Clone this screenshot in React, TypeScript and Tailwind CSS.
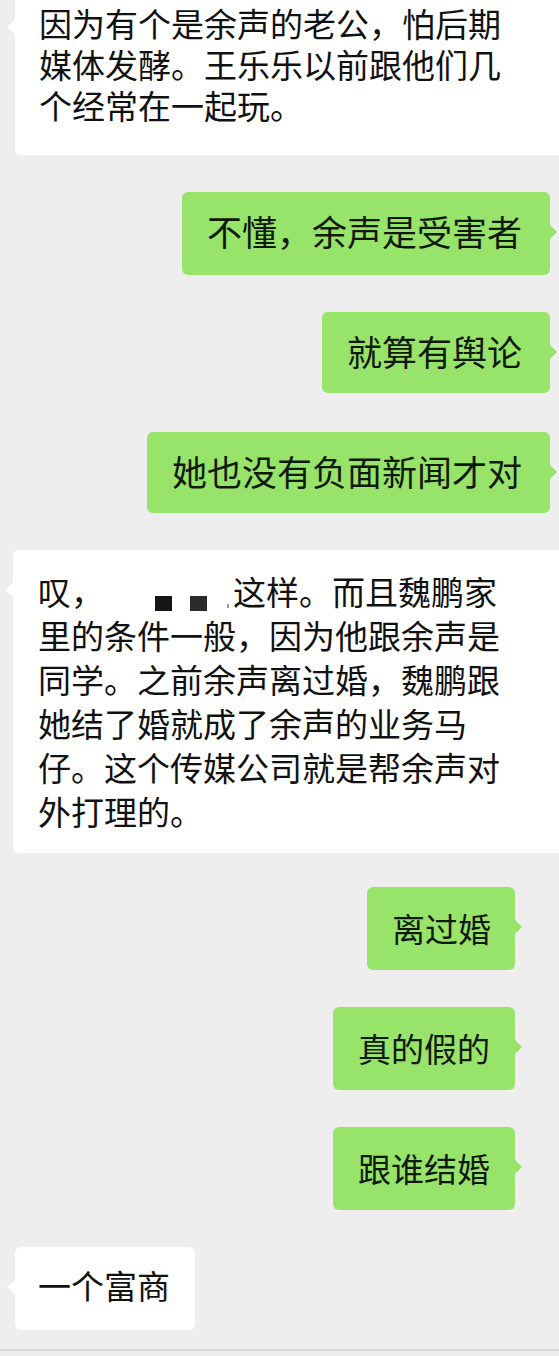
import React from 'react';

const GREEN = 'bg-[#98e36a]';

const LeftTail = () => (
  <span className="absolute left-[-8px] top-[33px] h-0 w-0 border-y-[7px] border-r-[8px] border-y-transparent border-r-white" />
);

const RightTail = () => (
  <span className="absolute right-[-7px] top-[33px] h-0 w-0 border-y-[7px] border-l-[7px] border-y-transparent border-l-[#98e36a]" />
);

interface GreenProps {
  text: string;
  className: string;
}

const GreenBubble: React.FC<GreenProps> = ({ text, className }) => (
  <div className={`relative self-end rounded-[6px] ${GREEN} text-[#101a0a] whitespace-nowrap ${className}`}>
    {text}
    <RightTail />
  </div>
);

const App: React.FC = () => {
  return (
    <div className="flex h-[1356px] w-[559px] flex-col overflow-hidden bg-[#eeeeee] font-['Noto_Sans_CJK_SC','Noto_Sans',sans-serif]">
      {/* incoming, top cut off */}
      <div className="relative ml-[15px] mr-[-12px] mt-[-13px] rounded-[6px] bg-white pb-[29px] pl-[24px] pt-[16px] text-[33px] leading-[41px] text-[#111] whitespace-nowrap">
        <div>因为有个是余声的老公，怕后期</div>
        <div>媒体发酵。王乐乐以前跟他们几</div>
        <div>个经常在一起玩。</div>
        <LeftTail />
      </div>

      <GreenBubble text="不懂，余声是受害者" className="mr-[9px] mt-[37px] pb-[24px] pl-[25px] pr-[28px] pt-[18px] text-[35px] leading-[41px]" />
      <GreenBubble text="就算有舆论" className="mr-[9px] mt-[37px] pb-[22px] pl-[25px] pr-[28px] pt-[18px] text-[35px] leading-[41px]" />
      <GreenBubble text="她也没有负面新闻才对" className="mr-[9px] mt-[39px] pb-[22px] pl-[25px] pr-[28px] pt-[18px] text-[35px] leading-[41px]" />

      {/* long incoming message */}
      <div className="relative ml-[13px] mr-[-12px] mt-[37px] rounded-[6px] bg-white pb-[20px] pl-[25px] pt-[19px] text-[33px] leading-[44px] text-[#111] whitespace-nowrap">
        <div className="flex h-[44px]">
          <span>叹，</span>
          <div className="relative flex w-[129px] items-start pt-[27px]">
            <span className="ml-[51px] h-[15px] w-[17px] bg-[#151515]" />
            <span className="ml-[18px] h-[15px] w-[17px] bg-[#2a2a2a]" />
            <span className="ml-[20px] mt-[8px] h-[4px] w-[2px] bg-[#9a9a9a]" />
          </div>
          <span>这样。而且魏鹏家</span>
        </div>
        <div>里的条件一般，因为他跟余声是</div>
        <div>同学。之前余声离过婚，魏鹏跟</div>
        <div>她结了婚就成了余声的业务马</div>
        <div>仔。这个传媒公司就是帮余声对</div>
        <div>外打理的。</div>
        <LeftTail />
      </div>

      <GreenBubble text="离过婚" className="mr-[44px] mt-[34px] pb-[21px] pl-[25px] pr-[24px] pt-[21px] text-[33px] leading-[41px]" />
      <GreenBubble text="真的假的" className="mr-[44px] mt-[37px] pb-[21px] pl-[25px] pr-[25px] pt-[21px] text-[33px] leading-[41px]" />
      <GreenBubble text="跟谁结婚" className="mr-[44px] mt-[37px] pb-[21px] pl-[25px] pr-[25px] pt-[21px] text-[33px] leading-[41px]" />

      <div className="relative ml-[15px] mt-[37px] self-start rounded-[6px] bg-white pb-[24px] pl-[23px] pr-[25px] pt-[18px] text-[33px] leading-[41px] text-[#111] whitespace-nowrap">
        一个富商
        <LeftTail />
      </div>

      <div className="mt-[19px] h-[2px] w-full bg-[#d9d9d9]" />
    </div>
  );
};

export default App;
